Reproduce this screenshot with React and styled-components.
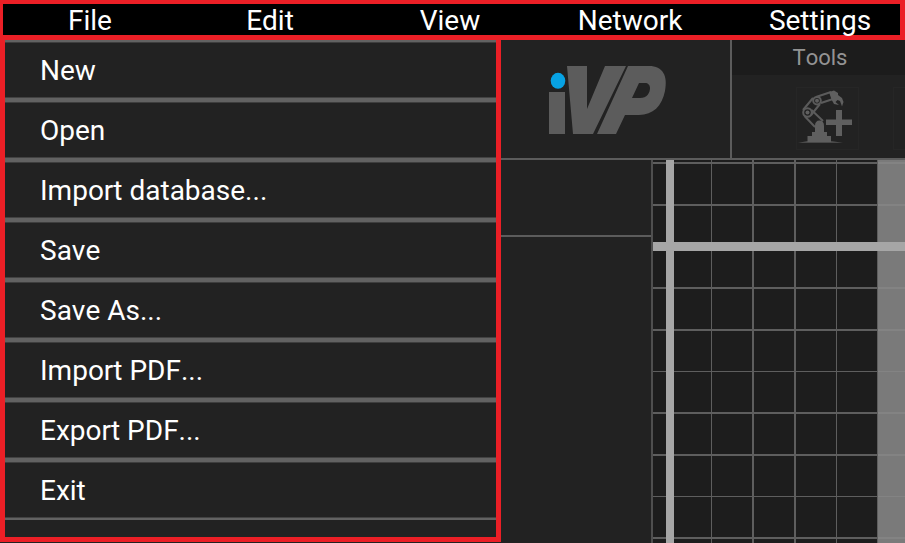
import React from 'react';
import styled, { createGlobalStyle } from 'styled-components';

const GlobalStyle = createGlobalStyle`
  * { box-sizing: border-box; }
  body { margin: 0; background: #222; overflow: hidden; }
`;

const AppFrame = styled.div`
  display: flex;
  flex-direction: column;
  width: 905px;
  height: 543px;
  overflow: hidden;
  background: #222;
  color: #fff;
  font-family: Roboto, sans-serif;
  font-size: 28px;
  font-kerning: none;
`;

const MenuBar = styled.nav`
  display: grid;
  grid-template-columns: 174px 183px 177px 183px 1fr;
  flex: none;
  height: 40px;
  border: solid #eb1f26;
  border-width: 4px 5px 5px 3px;
  background: #000;
`;

const MenuTitle = styled.div`
  display: flex;
  align-items: center;
  justify-content: center;
  padding-left: ${({ $shift = 0 }) => $shift}px;
  padding-top: 2px;
  line-height: 30px;
  white-space: nowrap;
`;

const Body = styled.div`
  display: flex;
  flex: 1;
  min-height: 0;
`;

const FileMenu = styled.ul`
  flex: none;
  width: 501px;
  height: 502px;
  margin: 0;
  padding: 0;
  list-style: none;
  overflow: hidden;
  border: solid #eb1f26;
  border-width: 0 5px 5px;
  background: #222;
`;

const MenuItem = styled.li`
  display: flex;
  align-items: center;
  height: 60px;
  padding: 2px 0 0 35px;
  background: linear-gradient(#626262 0 2px, #3e3e3e 2px 3px, #222 3px 57px, #424242 57px 58px, #626262 58px);
  line-height: 30px;
  white-space: nowrap;
`;

const Workspace = styled.main`
  display: flex;
  flex: 1;
  flex-direction: column;
  min-width: 0;
`;

const Header = styled.header`
  display: flex;
  flex: none;
  height: 120px;
  border-bottom: 2px solid #5c5c5c;
`;

const Brand = styled.div`
  flex: none;
  width: 231px;
  padding: 25px 0 0 47px;
  border-right: 2px solid #5c5c5c;
`;

const ToolPanel = styled.section`
  flex: 1;
  min-width: 0;
`;

const ToolHeading = styled.h2`
  height: 35px;
  margin: 0;
  padding-left: 3px;
  background: #1c1c1c;
  color: #939393;
  font-size: 22px;
  font-weight: 400;
  line-height: 36px;
  text-align: center;
`;

const ToolRow = styled.div`
  display: flex;
  gap: 34px;
  padding: 12px 0 0 64px;
  overflow: hidden;
`;

const ToolButton = styled.div`
  flex: none;
  width: 63px;
  height: 63px;
  border: 1px solid #262626;
`;

const Drawing = styled.svg`
  display: block;
`;

const Content = styled.div`
  display: flex;
  flex: 1;
  min-height: 0;
`;

const SidePanel = styled.aside`
  flex: none;
  width: 152px;
  border-right: 2px solid #4f4f4f;
`;

const SideHeader = styled.div`
  height: 77px;
  border-bottom: 2px solid #5c5c5c;
`;

const Canvas = styled.div`
  flex: 1;
  min-width: 0;
  background: #1d1d1d;
`;

const menus = [
  { label: 'File' },
  { label: 'Edit', shift: 3 },
  { label: 'View', shift: 3 },
  { label: 'Network', shift: 3 },
  { label: 'Settings', shift: 20 },
];

const items = ['New', 'Open', 'Import database...', 'Save', 'Save As...', 'Import PDF...', 'Export PDF...', 'Exit'];

const columns = [[58, 1], [99, 2], [141, 2], [183, 1], [224, 1]];
const rows = [[2, 2], [44, 2], [127, 2], [169, 2], [211, 1], [252, 2], [294, 2], [336, 1], [377, 2]];

function Logo() {
  return (
    <Drawing width="120" height="72" viewBox="0 0 120 72">
      <g fill="#5c5c5c">
        <path d="M1 27H17V69H1Z" />
        <path d="M19 1H39V44L57 1H78L45 69H25Z" />
        <path d="M80 1H101C115 1 120 11 117 26C114 41 105 50 91 50H77L68 69H49ZM91 18L84 33H92C99 33 102 28 102 23C102 20 100 18 97 18Z" fillRule="evenodd" />
      </g>
      <ellipse cx="10" cy="15.8" rx="7.3" ry="8" fill="#07a2e3" />
    </Drawing>
  );
}

function RobotIcon() {
  return (
    <Drawing width="61" height="61" viewBox="797 88 61 61" fill="none">
      <g stroke="#5b5b5b" strokeWidth="2" strokeLinejoin="round">
        <path d="M803 110L813 98M811 115L820 104" />
        <path d="M804.5 116L815 127M811.5 110L823 121" />
        <path d="M816 97L831 92M821 103L833 99" />
        <circle cx="807.5" cy="112.5" r="4.3" />
        <circle cx="817" cy="100.7" r="3.8" />
      </g>
      <g fill="#5f5f5f">
        <circle cx="807.5" cy="112.5" r="2" />
        <circle cx="817" cy="100.7" r="2" />
        <path d="M829 92L834 90.5L838 93V95L842 98L843.5 102L842 106.5L840 101L837.5 100L835.5 102L839 105L834 104L831.5 99.5Z" />
        <path d="M815 126Q815 120.5 819.5 120.5Q824 120.5 824 126V132H827V136H831V142H807.5V136H812V132H815Z" />
        <path d="M798 143L807 141H832L843 143Z" opacity=".65" />
        <path d="M836 110H842V119.5H852V125H842V136H836V125H826V119.5H836Z" />
      </g>
    </Drawing>
  );
}

function GridDrawing() {
  return (
    <Drawing width="252" height="383" shapeRendering="crispEdges">
      <rect x="225" width="27" height="383" fill="#7a7a7a" />
      <g fill="#5e5e5e">
        {columns.map(([x, w]) => <rect key={x} x={x} width={w} height="383" />)}
        {rows.map(([y, h]) => <rect key={y} y={y} width="225" height={h} />)}
      </g>
      <g fill="#838383">
        {rows.map(([y, h]) => <rect key={y} x="225" y={y} width="27" height={h} />)}
      </g>
      <g fill="#a6a6a6">
        <rect x="13" width="8" height="383" />
        <rect y="82" width="252" height="9" />
      </g>
    </Drawing>
  );
}

export default function App() {
  return (
    <>
      <GlobalStyle />
      <AppFrame>
        <MenuBar>
          {menus.map(({ label, shift }) => <MenuTitle key={label} $shift={shift}>{label}</MenuTitle>)}
        </MenuBar>
        <Body>
          <FileMenu>
            {items.map((label) => <MenuItem key={label}>{label}</MenuItem>)}
          </FileMenu>
          <Workspace>
            <Header>
              <Brand><Logo /></Brand>
              <ToolPanel>
                <ToolHeading>Tools</ToolHeading>
                <ToolRow>
                  <ToolButton><RobotIcon /></ToolButton>
                  <ToolButton />
                </ToolRow>
              </ToolPanel>
            </Header>
            <Content>
              <SidePanel><SideHeader /></SidePanel>
              <Canvas><GridDrawing /></Canvas>
            </Content>
          </Workspace>
        </Body>
      </AppFrame>
    </>
  );
}
